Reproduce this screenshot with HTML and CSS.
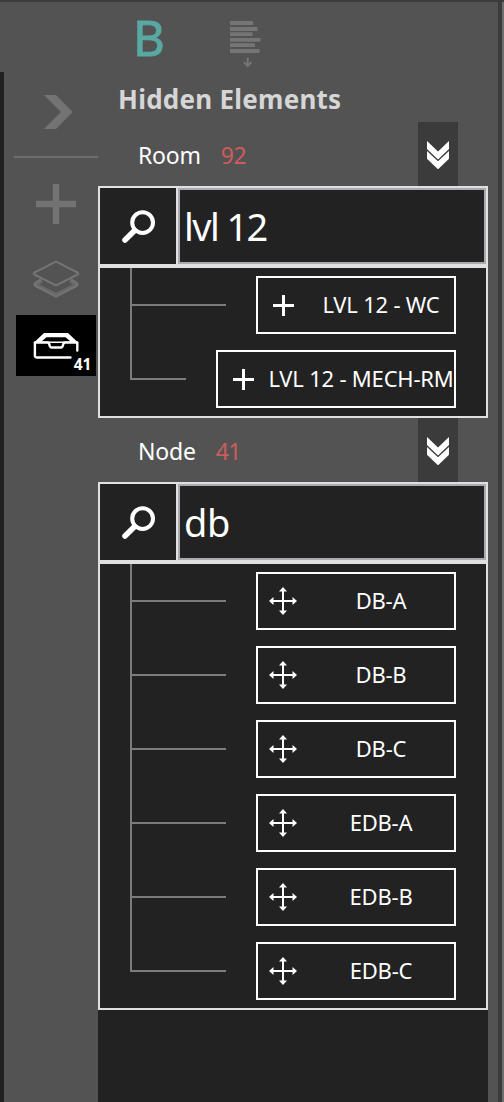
FILE: index.html
```
<!DOCTYPE html>
<html lang="en">
<head>
<meta charset="utf-8">
<title>Hidden Elements</title>
<link rel="stylesheet" href="styles.css">
</head>
<body>
<svg class="defs" width="0" height="0">
  <symbol id="search" viewBox="0 0 36 36"><circle cx="22.6" cy="13.6" r="10.4" fill="none" stroke="#fff" stroke-width="4"/><path d="M14.6 21.600L5 31" stroke="#fff" stroke-width="5.600" stroke-linecap="round"/></symbol>
  <symbol id="down" viewBox="0 0 22 28"><path fill="#fff" d="M0 0L11 10.500L22 0V8L11 18.500L0 8ZM0 10L11 20.300L22 10V17.800L11 28.300L0 17.800Z"/></symbol>
  <symbol id="plus" viewBox="0 0 21 21"><path fill="#fff" d="M9 0h3v9h9v3h-9v9h-3v-9H0v-3h9z"/></symbol>
  <symbol id="move" viewBox="0 0 28 28"><path fill="#fff" d="M13 3h2v10h10v2H15v10h-2V15H3v-2h10z"/><path fill="#fff" d="M14 0l4 4.500h-8z"/><path fill="#fff" d="M14 28l4-4.500h-8z"/><path fill="#fff" d="M0 14l4.500-4v8z"/><path fill="#fff" d="M28 14l-4.500-4v8z"/></symbol>
</svg>
<div class="app">
  <div class="gutter"></div>
  <nav class="sidebar">
    <div class="expand"><svg width="29" height="34" viewBox="0 0 29 34"><path fill="#737373" d="M0 0H12L28.700 17L12 34H0L17 17Z"/></svg></div>
    <div class="add"><svg width="40" height="40" viewBox="0 0 40 40"><path fill="#737373" d="M16.800 0h6.400v16.800H40v6.400H23.200V40h-6.400V23.200H0v-6.400h16.800z"/></svg></div>
    <div class="layers"><svg width="48" height="38" viewBox="0 0 48 38" fill="none" stroke="#737373" stroke-width="2" stroke-linejoin="round"><path d="M24 1.600L45.500 12.500Q47 13.500 45.500 14.500L24 25.500L2.500 14.500Q1 13.500 2.500 12.500Z"/><path stroke-width="4.200" d="M9.500 20.300L4 23.600Q3 24.400 4 25.200L24 35.300L44 25.200Q45 24.400 44 23.600L38.500 20.300"/><path stroke="#5e5e5e" stroke-width=".9" d="M9.500 21.500L5 24.400L24 34.600L43 24.400L38.500 21.500"/></svg></div>
    <div class="drawer"><svg width="46" height="27" viewBox="0 0 46 27"><path fill="none" stroke="#fff" stroke-width="2.400" stroke-linecap="round" stroke-linejoin="round" d="M37.500 24.500H4Q1.900 24.500 1.900 22.400V9.500H14.500C17.500 9.500 15.500 14.500 18.500 14.500H28C31 14.500 29 9.500 32 9.500H44.300V17.500"/><path fill="#fff" fill-rule="evenodd" d="M11 0H35L45.500 10H0.500ZM13.500 4.300L8.500 8.500H37.500L32.500 4.300Z"/></svg><span class="count">41</span></div>
  </nav>
  <main class="panel">
    <div class="toolbar">
      <span class="logo">B</span>
      <svg class="sort" width="31" height="47" viewBox="0 0 31 47" fill="#757575"><path d="M0 0h23v4H0zM0 6h27.500v4H0zM0 11.300h22.500v3.700H0zM0 17h30.500v3.700H0zM0 22.300h25v3.700H0zM0 28h29.500v4H0z"/><path d="M17.700 36.500V45M14 41L17.700 45L21.400 41" fill="none" stroke="#757575" stroke-width="2"/></svg>
    </div>
    <h1 class="title">Hidden Elements</h1>

    <section class="group">
      <header class="head"><span class="name">Room</span><span class="total">92</span><span class="tab"><svg width="22" height="29" viewBox="0 0 22 29"><use href="#down" width="22" height="28"/></svg></span></header>
      <div class="search"><span class="find"><svg width="36" height="36"><use href="#search"/></svg></span><div class="field field-room">lvl 12</div></div>
      <div class="tree">
        <div class="row"><i class="branch"></i><div class="item"><span class="glyph"><svg class="plus" width="21" height="21"><use href="#plus"/></svg></span><span class="label">LVL 12 - WC</span></div></div>
        <div class="row"><i class="branch"></i><div class="item wide"><span class="glyph"><svg class="plus" width="21" height="21"><use href="#plus"/></svg></span><span class="label">LVL 12 - MECH-RM</span></div></div>
      </div>
    </section>

    <section class="group">
      <header class="head"><span class="name">Node</span><span class="total">41</span><span class="tab"><svg width="22" height="29" viewBox="0 0 22 29"><use href="#down" width="22" height="28"/></svg></span></header>
      <div class="search"><span class="find"><svg width="36" height="36"><use href="#search"/></svg></span><div class="field">db</div></div>
      <div class="tree">
        <div class="row"><i class="branch"></i><div class="item"><span class="glyph"><svg width="28" height="28"><use href="#move"/></svg></span><span class="label">DB-A</span></div></div>
        <div class="row"><i class="branch"></i><div class="item"><span class="glyph"><svg width="28" height="28"><use href="#move"/></svg></span><span class="label">DB-B</span></div></div>
        <div class="row"><i class="branch"></i><div class="item"><span class="glyph"><svg width="28" height="28"><use href="#move"/></svg></span><span class="label">DB-C</span></div></div>
        <div class="row"><i class="branch"></i><div class="item"><span class="glyph"><svg width="28" height="28"><use href="#move"/></svg></span><span class="label">EDB-A</span></div></div>
        <div class="row"><i class="branch"></i><div class="item"><span class="glyph"><svg width="28" height="28"><use href="#move"/></svg></span><span class="label">EDB-B</span></div></div>
        <div class="row"><i class="branch"></i><div class="item"><span class="glyph"><svg width="28" height="28"><use href="#move"/></svg></span><span class="label">EDB-C</span></div></div>
      </div>
    </section>
    <div class="rest"></div>
  </main>
  <div class="edge"></div>
</div>
</body>
</html>
```
FILE: styles.css
```
*, *::before, *::after { box-sizing: border-box; }
body { margin: 0; font-family: "Noto Sans", "Open Sans", sans-serif; color: #fff; background: #535353; }
svg { display: block; flex: none; }
.defs { position: absolute; }
.app { display: flex; width: 504px; height: 1102px; border-top: 2px solid #3b3b3b; overflow: hidden; }
.gutter { width: 4px; margin-top: 70px; background: #222; }
.sidebar { width: 94px; padding-top: 93px; }
.expand { height: 63px; margin-left: 10px; padding-left: 30px; border-bottom: 2px solid #6e6e6e; }
.add { padding: 26px 0 0 32px; height: 102px; }
.layers { height: 55px; padding-left: 28px; }
.drawer { display: grid; width: 80px; height: 61px; margin-left: 12px; background: #000; padding: 18px 0 0 17px; }
.drawer > * { grid-area: 1 / 1; }
.count { align-self: end; justify-self: end; padding: 0 5px 0 2px; font-size: 15.500px; font-weight: 700; line-height: 24px; letter-spacing: -0.3px; }
.panel { display: flex; flex-direction: column; width: 390px; }
.toolbar { display: flex; height: 74px; }
.logo { width: 132px; padding-left: 35px; color: #58a9a3; font-size: 49px; line-height: 70px; -webkit-text-stroke: 0.9px #58a9a3; }
.sort { margin-top: 19px; }
.title { margin: 0; height: 46px; padding-left: 20px; font-size: 26px; line-height: 46px; font-weight: 700; letter-spacing: 0.25px; color: #d6d6d6; white-space: nowrap; }
.head { display: flex; height: 64px; padding: 0 30px 0 40px; font-size: 23px; line-height: 66px; letter-spacing: -0.2px; }
.total { margin-left: 20px; color: #cc5c5c; letter-spacing: -0.5px; }
.tab { width: 40px; margin-left: auto; padding: 19px 0 0 9px; background: #3b3b3b; }
.search { display: flex; height: 80px; border: 2px solid #e0e0e0; background: #222; }
.find { width: 78px; padding: 21px 0 0 20px; border-right: 2px solid #e0e0e0; }
.field { flex: 1; padding-left: 4px; border: 2px solid #abaab0; font-size: 38px; line-height: 73px; letter-spacing: -0.4px; }
.field-room { letter-spacing: -1.6px; }
.tree { border: 2px solid #e0e0e0; background: #222; padding: 0 30px; }
.row { display: flex; height: 74px; align-items: center; }
.branch { display: flex; flex-direction: column; flex: 1; height: 74px; margin-right: 30px; }
.branch::before { content: ""; height: 38px; border: solid #7c7c7c; border-width: 0 0 2px 2px; }
.branch::after { content: ""; height: 36px; border-left: 2px solid #7c7c7c; }
.row:last-child .branch::after { border: 0; }
.item { display: flex; align-items: center; width: 200px; height: 58px; border: 2px solid #fff; }
.wide { width: 240px; }
.glyph { display: flex; justify-content: center; flex: none; width: 50px; }
.plus { margin: 1px 0 0 1px; }
.label { flex: 1; text-align: center; font-size: 22px; line-height: 52px; padding-bottom: 2px; letter-spacing: -0.2px; white-space: nowrap; }
.rest { flex: 1; background: #222; }
.edge { width: 6px; margin-left: 10px; background: #6f6f6f; border-left: 4px solid #3b3b3b; }
```
